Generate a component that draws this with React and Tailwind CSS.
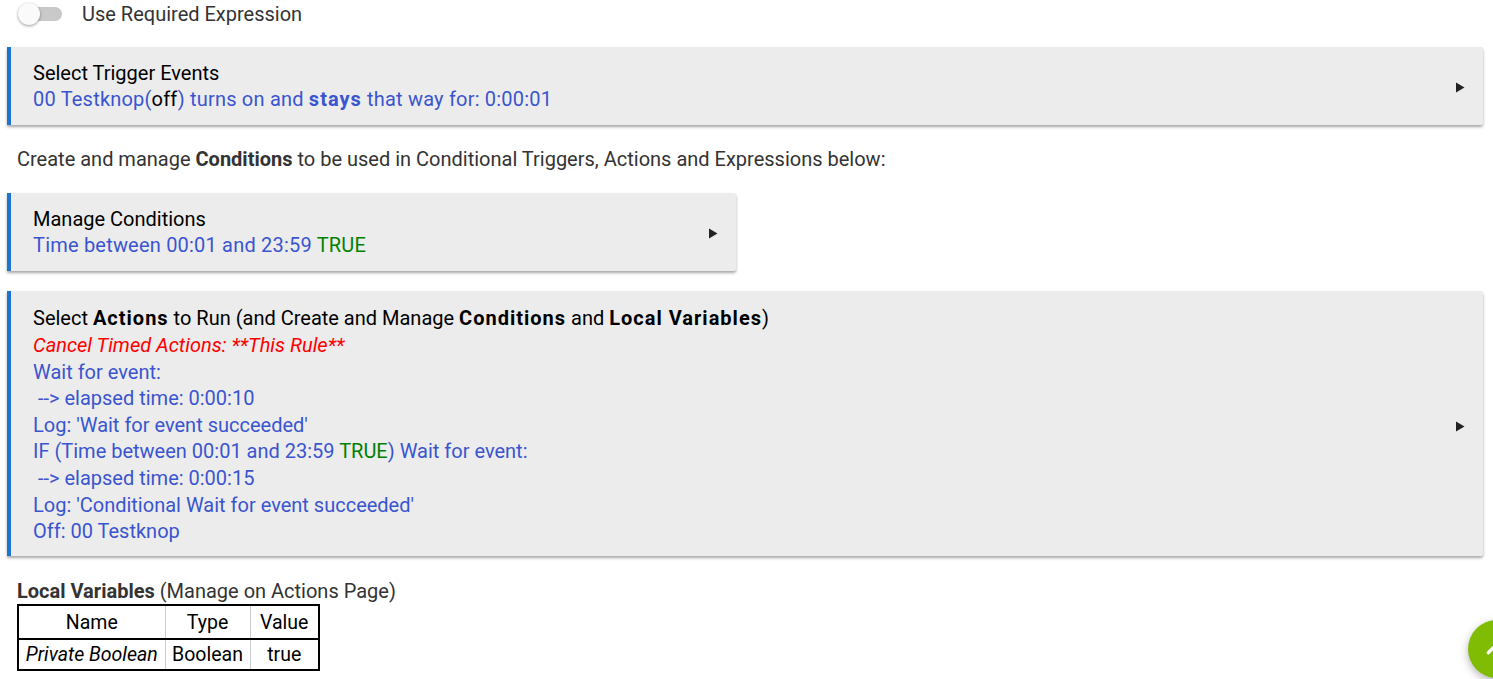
const Arrow = () => (
  <svg width="10" height="11" viewBox="0 0 10 11" className="mt-[3px] shrink-0">
    <path d="M1 0.5 L9.5 5.5 L1 10.5 Z" fill="#222" />
  </svg>
);

const Card = ({ children, className = "" }) => (
  <div
    className={`flex items-center border-l-4 border-[#1d74d0] bg-[#ececec] pl-[22px] pr-[18px] py-[12.5px] shadow-[0_2px_3px_rgba(0,0,0,0.35)] rounded-r-[2px] ${className}`}
  >
    <div className="flex-1 text-[20px] leading-[26.6px] text-[#3a55cf]">{children}</div>
    <Arrow />
  </div>
);

const Title = ({ children }) => <div className="text-black">{children}</div>;

const B = ({ children }) => <b className="tracking-[1px]">{children}</b>;

const App = () => {
  return (
    <div className="relative h-[679px] w-[1493px] overflow-hidden bg-white font-['Roboto',sans-serif]">
      <div className="flex h-[26px] items-center gap-5 pl-[18px] pt-[1px]">
        <div className="relative h-[14px] w-[44px] rounded-full bg-[#c9c9c9]">
          <div className="absolute left-0 top-[-4px] h-[22px] w-[22px] rounded-full bg-[#fafafa] shadow-[0_1px_3px_rgba(0,0,0,0.4)]" />
        </div>
        <span className="text-[20px] text-[#333]">Use Required Expression</span>
      </div>

      <div className="pl-[7px] pr-[10px] pt-[21px]">
        <Card>
          <Title>Select Trigger Events</Title>
          <div className="tracking-[0.2px]">
            00 Testknop(<span className="text-black">off</span>) turns on and <B>stays</B> that way for: 0:00:01
          </div>
        </Card>
      </div>

      <p className="pl-[17px] pt-[21px] text-[20px] leading-[26px] text-[#333]">
        Create and manage <b>Conditions</b> to be used in Conditional Triggers, Actions and Expressions below:
      </p>

      <div className="w-[736px] pl-[7px] pt-[21px]">
        <Card>
          <Title>Manage Conditions</Title>
          <div className="tracking-[0.2px]">
            Time between 00:01 and 23:59 <span className="text-[#008000]">TRUE</span>
          </div>
        </Card>
      </div>

      <div className="pl-[7px] pr-[10px] pt-[20px]">
        <Card className="pt-[14px] pb-[11px]">
          <Title>
            Select <B>Actions</B> to Run (and Create and Manage <B>Conditions</B> and <B>Local Variables</B>)
          </Title>
          <div className="italic text-[#ff0000]">Cancel Timed Actions: **This Rule**</div>
          <div>Wait for event:</div>
          <div>&nbsp;--&gt; elapsed time: 0:00:10</div>
          <div>Log: 'Wait for event succeeded'</div>
          <div>
            IF (Time between 00:01 and 23:59 <span className="text-[#008000]">TRUE</span>) Wait for event:
          </div>
          <div>&nbsp;--&gt; elapsed time: 0:00:15</div>
          <div>Log: 'Conditional Wait for event succeeded'</div>
          <div>Off: 00 Testknop</div>
        </Card>
      </div>

      <div className="pl-[17px] pt-[22px]">
        <div className="text-[20px] leading-[26px] text-[#333]">
          <b>Local Variables</b> (Manage on Actions Page)
        </div>
        <table className="border-2 border-black text-[19.5px] leading-[24px] text-black">
          <tbody>
            <tr className="border-b-2 border-black">
              <td className="h-[34px] w-[147px] border-r border-[#ccc] pt-[2px] text-center">Name</td>
              <td className="w-[85px] border-r border-[#ccc] pt-[2px] text-center">Type</td>
              <td className="w-[69px] pt-[2px] text-center">Value</td>
            </tr>
            <tr>
              <td className="h-[31px] border-r border-[#ccc] pt-[1px] text-center italic">Private Boolean</td>
              <td className="border-r border-[#ccc] pt-[1px] text-center">Boolean</td>
              <td className="pt-[1px] text-center">true</td>
            </tr>
          </tbody>
        </table>
      </div>

      <div className="absolute left-[1468px] top-[620px] flex h-[58px] w-[58px] items-center justify-center rounded-full bg-[#7fbc03] shadow-[0_3px_8px_rgba(0,0,0,0.3)]">
        <svg width="30" height="30" viewBox="0 0 24 24" fill="none" stroke="white" strokeWidth="2.6" strokeLinecap="round">
          <path d="M5 15 L12 8 L19 15" />
        </svg>
      </div>
    </div>
  );
};

export default App;
